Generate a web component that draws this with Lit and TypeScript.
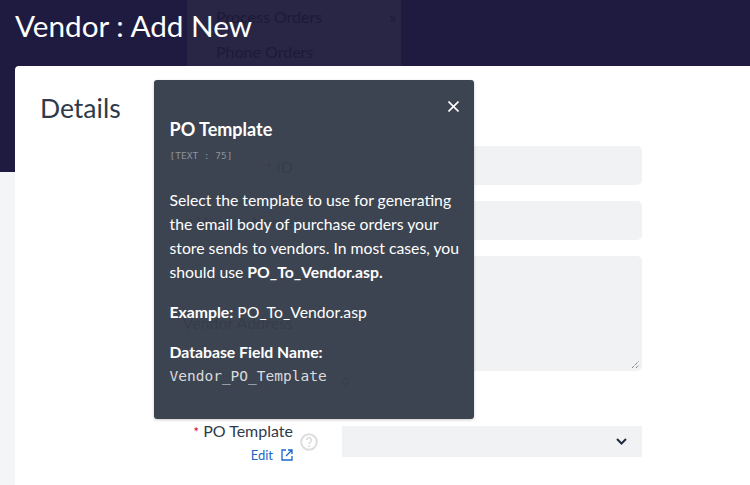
import { LitElement, html, css } from "lit";
import { customElement } from "lit/decorators.js";

const help = html`<svg class="help" viewBox="0 0 18 18" width="18" height="18"><circle cx="9" cy="9" r="7.8" fill="none" stroke="currentColor" stroke-width="2"/><path d="M6.6 7.100a2.400 2.400 0 1 1 3.700 2c-.9.6-1.300 1-1.300 2" fill="none" stroke="currentColor" stroke-width="1.600"/><circle cx="9" cy="13.300" r="1" fill="currentColor"/></svg>`;

@customElement("app-root")
export class AppRoot extends LitElement {
  static styles = css`
    :host { display: block; font-family: Lato, "Liberation Sans", sans-serif; }
    .page { position: relative; width: 750px; height: 485px; overflow: hidden; box-sizing: border-box; padding: 4px 0 0 15px; background: linear-gradient(#1f1b40 172px, #f4f5f6 172px); }
    .menu { position: absolute; left: 187px; top: -1px; width: 214px; height: 67px; box-sizing: border-box; padding: 0 0 0 29px; background: #292544; color: #1c1a38; font-size: 16px; line-height: 35px; }
    .menu div { display: flex; justify-content: space-between; padding-right: 5px; }
    h1 { position: relative; margin: 0 0 19px; color: #fff; font-size: 29.7px; font-weight: 400; line-height: 43px; }
    .card { position: relative; width: 735px; height: 419px; box-sizing: border-box; padding: 24px 25px 0 26px; background: #fff; border-radius: 4px 0 0 0; color: #2f3a4a; }
    h2 { margin: 0 0 0 -1px; font-size: 26.5px; font-weight: 400; line-height: 36px; color: #2f3a4a; }
    .rows { display: flex; flex-direction: column; gap: 16px; margin: 20px 0 0 0; }
    .row { display: grid; grid-template-columns: 252px 49px 300px; }
    .lab { text-align: right; font-size: 16px; line-height: 20px; padding-top: 11px; }
    .star { color: #d0021b; font-size: 13px; }
    .hc { padding: 13px 0 0 7px; color: #dcdddf; }
    .help { display: block; }
    .field { background: #f1f2f4; border-radius: 5px; height: 39px; position: relative; }
    .ta { height: 115px; }
    .grip { position: absolute; right: 2px; bottom: 2px; }
    .ta-lab { padding-top: 57px; }
    .ta-hc { padding-top: 59px; }
    .count { margin: 4px 0 0 301px; font-size: 12px; line-height: 14px; color: #4a5563; }
    .sel-row { margin-top: 32px; }
    .sel-lab { padding-top: 0; }
    .sel { height: 31px; margin-top: 5px; border-radius: 0; display: flex; align-items: center; justify-content: flex-end; padding-right: 15px; box-sizing: border-box; color: #1f2d40; }
    .sel-hc { padding-top: 12px; }
    .edit { display: flex; justify-content: flex-end; align-items: center; gap: 8px; margin-top: 3px; color: #1a66c9; font-size: 13px; line-height: 20px; }
    .pop { position: absolute; left: 154px; top: 80px; width: 320px; height: 339px; box-sizing: border-box; padding: 38px 10px 0 15.500px; border-radius: 3px; background: rgba(53, 60, 74, 0.96); color: #fff; box-shadow: 0 1px 3px rgba(0,0,0,.2); font-size: 15.750px; line-height: 24px; }
    .x { position: absolute; right: 15px; top: 21px; display: block; }
    .pop h3 { margin: 0; font-size: 18px; font-weight: 700; line-height: 22px; }
    .type { margin-top: 9px; font-family: "DejaVu Sans Mono", monospace; font-size: 9.500px; line-height: 14px; color: #8d939c; }
    .pop p { margin: 0; }
    .desc { padding-top: 25px; }
    .ex { padding-top: 16px; }
    .db { padding-top: 16px; }
    .mono { font-family: "DejaVu Sans Mono", monospace; font-size: 14.500px; line-height: 24px; color: #d9dbde; }
  `;

  render() {
    return html`<div class="page">
      <div class="menu"><div><span>Process Orders</span><span>»</span></div><div>Phone Orders</div></div>
      <h1>Vendor : Add New</h1>
      <div class="card">
        <h2>Details</h2>
        <div class="rows">
          <div class="row"><div class="lab"><span class="star">*</span> ID</div><div class="hc">${help}</div><div class="field"></div></div>
          <div class="row"><div class="lab"><span class="star">*</span> Vendor Name</div><div class="hc">${help}</div><div class="field"></div></div>
          <div class="row"><div class="lab ta-lab">Vendor Address</div><div class="hc ta-hc">${help}</div>
            <div class="field ta"><svg class="grip" width="9" height="9" viewBox="0 0 9 9"><path d="M1 8L8 1M5 8L8 5" stroke="#555" stroke-width="1" stroke-dasharray="1 1" fill="none"/></svg></div></div>
        </div>
        <div class="count">0</div>
        <div class="row sel-row">
          <div class="lab sel-lab"><div><span class="star">*</span> PO Template</div>
            <div class="edit"><span>Edit</span><svg width="12" height="12" viewBox="0 0 12 12" fill="none" stroke="currentColor" stroke-width="1.300"><path d="M5 1H1v10h10V7M7 1h4v4M11 1L5 7"/></svg></div></div>
          <div class="hc sel-hc">${help}</div>
          <div class="field sel"><svg width="11" height="7" viewBox="0 0 11 7" fill="none" stroke="currentColor" stroke-width="2"><path d="M1 1l4.500 4.500L10 1"/></svg></div>
        </div>
      </div>
      <div class="pop">
        <svg class="x" width="11" height="11" viewBox="0 0 11 11" stroke="#fff" stroke-width="1.600"><path d="M.5.5l10 10M10.500.5l-10 10"/></svg>
        <h3>PO Template</h3>
        <div class="type">[TEXT : 75]</div>
        <p class="desc">Select the template to use for generating the email body of purchase orders your store sends to vendors. In most cases, you should use <b>PO_To_Vendor.asp.</b></p>
        <p class="ex"><b>Example:</b> PO_To_Vendor.asp</p>
        <p class="db"><b>Database Field Name:</b></p>
        <div class="mono">Vendor_PO_Template</div>
      </div>
    </div>`;
  }
}
